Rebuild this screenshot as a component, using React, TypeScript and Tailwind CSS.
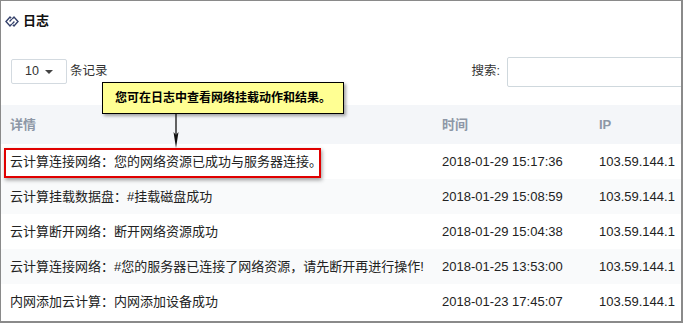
import React from 'react';

const rows = [
  { detail: '云计算连接网络：您的网络资源已成功与服务器连接。', time: '2018-01-29 15:17:36', ip: '103.59.144.1' },
  { detail: '云计算挂载数据盘：#挂载磁盘成功', time: '2018-01-29 15:08:59', ip: '103.59.144.1' },
  { detail: '云计算断开网络：断开网络资源成功', time: '2018-01-29 15:04:38', ip: '103.59.144.1' },
  { detail: '云计算连接网络：#您的服务器已连接了网络资源，请先断开再进行操作!', time: '2018-01-25 13:53:00', ip: '103.59.144.1' },
  { detail: '内网添加云计算：内网添加设备成功', time: '2018-01-23 17:45:07', ip: '103.59.144.1' },
];

// chain-link style icon: two interlocked diamonds
const LinkIcon = () => (
  <svg width="14" height="11" viewBox="0 0 14 11" fill="none" stroke="#34406a" strokeWidth="1.4">
    <path d="M6.2 2.3 L5 1.1 L1 5.5 L5 9.9 L6.8 8" />
    <path d="M7.8 8.7 L9 9.9 L13 5.5 L9 1.1 L7.2 3" />
    <path d="M4.6 5.5 L6.8 3.1 M9.4 5.5 L7.2 7.9" />
  </svg>
);

export default function App() {
  return (
    <div
      className="relative w-[683px] h-[323px] overflow-hidden bg-white border-l border-t border-b-2 border-r-2 border-[#8a8a8a] text-[#222]"
      style={{ fontFamily: '"Liberation Sans", "Noto Sans CJK SC", sans-serif' }}
    >
      {/* title */}
      <div className="flex items-center h-[40px] pl-[4px] gap-[4px]">
        <LinkIcon />
        <span className="text-[13px] font-bold text-[#111]">日志</span>
      </div>

      {/* controls */}
      <div className="flex items-center justify-between h-[64px] pl-[10px] pb-[3px]">
        <div className="flex items-center gap-[3px]">
          <div className="flex items-center justify-center gap-[6px] w-[56px] h-[25px] border border-[#d3dae0] rounded-[2px] text-[12.5px] text-[#333]">
            <span>10</span>
            <span className="w-0 h-0 border-l-[4px] border-r-[4px] border-t-[4px] border-l-transparent border-r-transparent border-t-[#444]" />
          </div>
          <span className="text-[12.5px] text-[#333]">条记录</span>
        </div>
        <div className="flex items-center gap-[7px]">
          <span className="text-[12.5px] text-[#333]">搜索:</span>
          <div className="w-[180px] h-[30px] border border-[#cfd8dd] rounded-[2px] -mr-[6px]" />
        </div>
      </div>

      {/* table */}
      <div className="grid grid-cols-[432px_157px_1fr] text-[13px]">
        <div className="bg-[#f4f6f9] h-[39px] flex items-center pl-[9px] font-bold text-[#8d97a6]">详情</div>
        <div className="bg-[#f4f6f9] h-[39px] flex items-center pl-[9px] font-bold text-[#8d97a6]">时间</div>
        <div className="bg-[#f4f6f9] h-[39px] flex items-center pl-[9px] font-bold text-[#8d97a6]">IP</div>
        {rows.map((r, i) => (
          <React.Fragment key={i}>
            <div className={`h-[35px] flex items-center pl-[9px] whitespace-nowrap ${i % 2 ? 'bg-[#f9fafb]' : 'bg-white'}`}>{r.detail}</div>
            <div className={`h-[35px] flex items-center pl-[9px] whitespace-nowrap ${i % 2 ? 'bg-[#f9fafb]' : 'bg-white'}`}>{r.time}</div>
            <div className={`h-[35px] flex items-center pl-[9px] whitespace-nowrap ${i % 2 ? 'bg-[#f9fafb]' : 'bg-white'}`}>{r.ip}</div>
          </React.Fragment>
        ))}
      </div>

      {/* callout */}
      <div className="absolute left-[101px] top-[81px] w-[242px] h-[32px] bg-[#ffff93] border border-black shadow-[2px_2px_3px_rgba(0,0,0,0.35)] flex items-center justify-center text-[12px] font-bold text-black">
        您可在日志中查看网络挂载动作和结果。
      </div>
      <svg className="absolute left-[170px] top-[113px]" width="10" height="35" viewBox="0 0 10 35">
        <line x1="5" y1="0" x2="5" y2="22" stroke="#111" strokeWidth="1.3" />
        <path d="M2.5 18 L5 34 L7.5 18 L5 21 Z" fill="#111" />
      </svg>
      <div className="absolute left-[3px] top-[147px] w-[317px] h-[30px] border-2 border-[#e00000] shadow-[1px_2px_4px_rgba(0,0,0,0.4)]" />
    </div>
  );
}
